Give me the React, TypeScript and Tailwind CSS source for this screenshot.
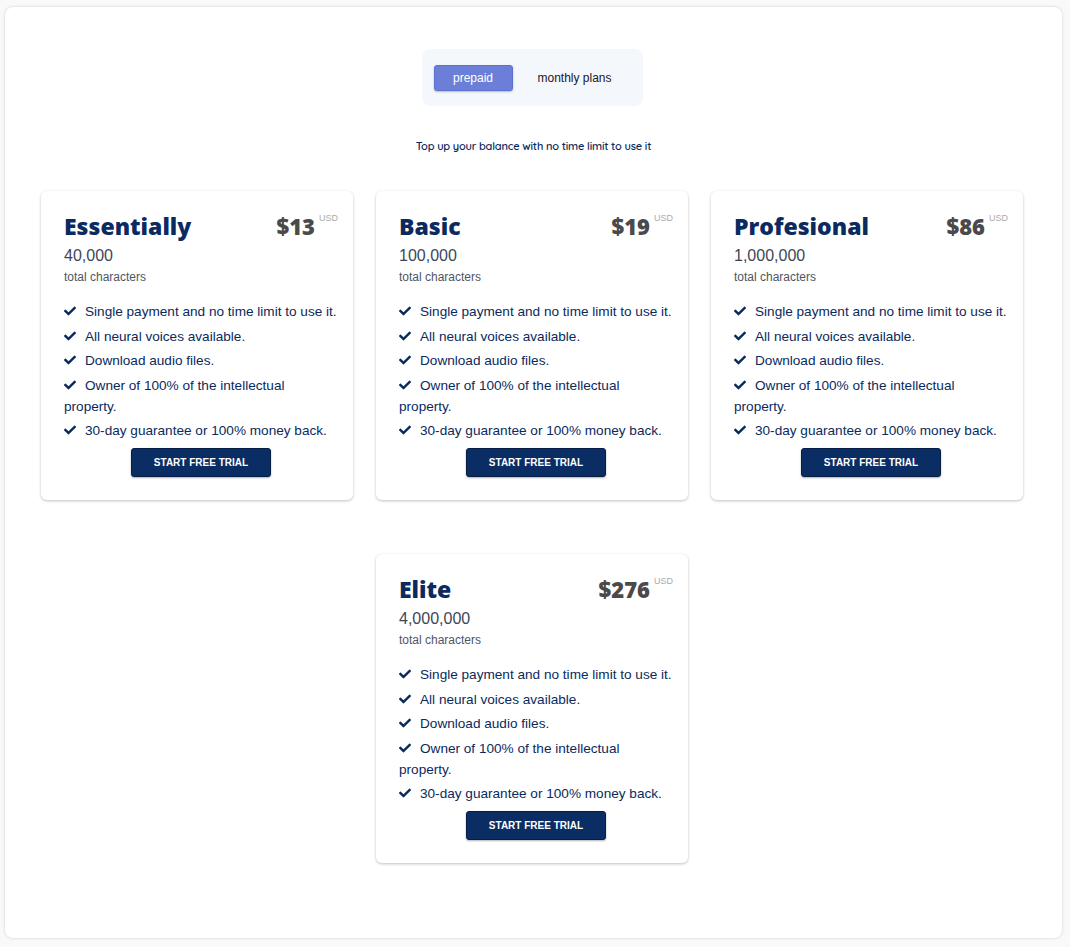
import { FaCheck } from "react-icons/fa";

const plans = [
  { name: "Essentially", price: 13, chars: "40,000" },
  { name: "Basic", price: 19, chars: "100,000" },
  { name: "Profesional", price: 86, chars: "1,000,000" },
  { name: "Elite", price: 276, chars: "4,000,000" },
];

const features = [
  "Single payment and no time limit to use it.",
  "All neural voices available.",
  "Download audio files.",
  "Owner of 100% of the intellectual property.",
  "30-day guarantee or 100% money back.",
];

function PlanCard({ plan }: { plan: (typeof plans)[number] }) {
  return (
    <div className="w-[312px] rounded-[6px] bg-white pl-[23px] pr-[15px] pt-[20px] pb-[23px] shadow-[0_1px_3px_rgba(0,0,0,0.25)]">
      <div className="flex items-start justify-between">
        <h3 className="font-['Open_Sans',sans-serif] text-[23px] font-extrabold leading-[30px] text-[#0b2a5f]">
          {plan.name}
        </h3>
        <div className="flex items-start pt-[1px]">
          <span className="font-['Open_Sans',sans-serif] text-[22px] font-extrabold leading-[28px] text-[#4a4a4a]">
            ${plan.price}
          </span>
          <span className="ml-[4px] mt-[1px] font-['Liberation_Sans',sans-serif] text-[9px] leading-[10px] text-[#aaaaaa]">
            USD
          </span>
        </div>
      </div>
      <div className="mt-[5px] font-['Liberation_Sans',sans-serif] text-[16px] leading-[20px] text-[#3d4659]">
        {plan.chars}
      </div>
      <div className="mt-[4px] font-['Liberation_Sans',sans-serif] text-[12px] leading-[15px] text-[#4f5563]">
        total characters
      </div>
      <ul className="mt-[16px] flex flex-col gap-[3.5px] font-['Liberation_Sans',sans-serif] text-[13.6px] leading-[21px] text-[#0a2a5e]">
        {features.map((f) => (
          <li key={f}>
            <FaCheck className="mr-[9px] inline-block h-[12px] w-[12px] -translate-y-[1px] align-middle text-[#0a2a5e]" />
            {f}
          </li>
        ))}
      </ul>
      <div className="mt-[7px] flex justify-center">
        <button className="h-[29px] w-[140px] rounded-[3px] border border-[#061d45] bg-[#0a2d63] font-['Liberation_Sans',sans-serif] text-[10px] font-bold text-white shadow-[0_1px_2px_rgba(0,0,0,0.3)]">
          START FREE TRIAL
        </button>
      </div>
    </div>
  );
}

export default function App() {
  return (
    <div className="min-h-[947px] bg-[#f9f9f9] px-[5px] pt-[7px] pb-[9px]">
      <div className="flex min-h-[931px] w-[1057px] flex-col items-center rounded-[8px] bg-white pt-[42px] shadow-[0_0_3px_rgba(0,0,0,0.18)]">
        <div className="mr-[3px] flex h-[57px] w-[221px] items-center rounded-[8px] bg-[#f4f7fc] pl-[12px]">
          <button className="h-[26px] w-[79px] rounded-[3px] border border-[#5d71cf] bg-[#6b7fd8] font-['Liberation_Sans',sans-serif] text-[12px] text-white shadow-[0_1px_2px_rgba(0,0,0,0.25)]">
            prepaid
          </button>
          <span className="ml-[25px] font-['Liberation_Sans',sans-serif] text-[12px] text-[#1a1a1a]">
            monthly plans
          </span>
        </div>
        <p className="mt-[33px] font-['Quicksand','Lato','Liberation_Sans',sans-serif] text-[11px] font-semibold leading-[14px] text-[#0a2a5e] tracking-[-0.2px]">
          Top up your balance with no time limit to use it
        </p>
        <div className="mr-[3px] mt-[38px] grid grid-cols-[312px_312px_312px] gap-x-[23px] gap-y-[54px]">
          {plans.slice(0, 3).map((p) => (
            <PlanCard key={p.name} plan={p} />
          ))}
          <div className="col-start-2">
            <PlanCard plan={plans[3]} />
          </div>
        </div>
      </div>
    </div>
  );
}
